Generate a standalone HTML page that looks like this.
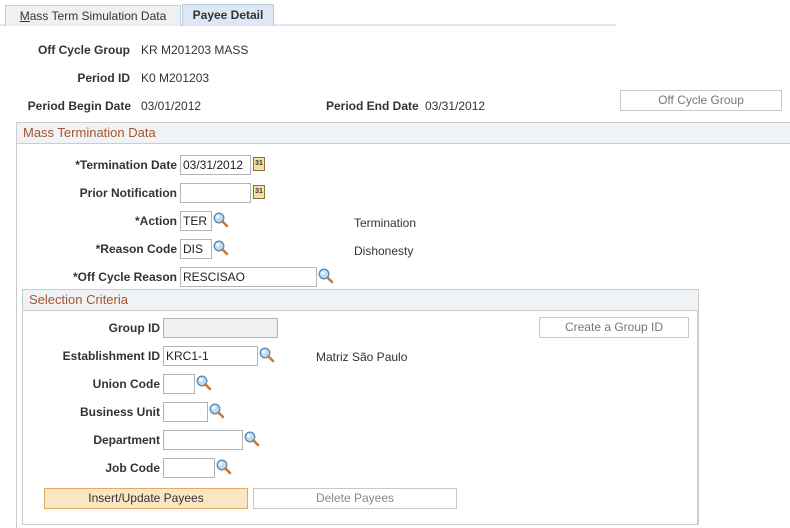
<!DOCTYPE html>
<html style="width:790px;height:528px;overflow:hidden"><head><meta charset="utf-8"><style>
*{margin:0;padding:0;box-sizing:border-box}
body{width:790px;height:528px;background:#fff;position:relative;overflow:hidden;font-family:"Liberation Sans",Arial,sans-serif;font-size:12px;color:#333}
.a{position:absolute}
.l{position:absolute;font-weight:bold;text-align:right;white-space:nowrap;line-height:14px}
.v{position:absolute;white-space:nowrap;line-height:14px}
.in{position:absolute;height:20px;border:1px solid #b4b4b4;background:#fff;padding-left:2px;line-height:18px;font-size:12px;color:#222}
.btn{position:absolute;height:21px;border:1px solid #c8c8c8;background:#fff;color:#777;text-align:center;line-height:19px}
.hd{position:absolute;background:#f0f3f5;border:1px solid #ccc;color:#a8542a;font-size:13px;line-height:19px;padding-left:6px}
.mg{position:absolute;width:16px;height:16px}
.cal{position:absolute;width:12px;height:14px;background:#f4e0a0;border:1px solid #8a7040;font-size:7px;font-weight:bold;line-height:11px;text-align:center;color:#333}
</style></head><body>
<div class="a" style="left:0;top:24px;width:616px;height:2px;background:#dde8f4"></div>
<div class="a" style="left:5px;top:5px;width:176px;height:21px;background:#eef1f4;border:1px solid #c8d0d8;border-bottom:none;text-align:center;line-height:20px;font-size:12px;color:#333"><u>M</u>ass Term Simulation Data</div>
<div class="a" style="left:182px;top:4px;width:92px;height:22px;background:#dde8f4;border:1px solid #b8c8d8;border-bottom:none;text-align:center;line-height:21px;font-weight:bold;color:#333">Payee Detail</div>

<div class="l" style="right:660px;top:43px">Off Cycle Group</div><div class="v" style="left:141px;top:43px">KR M201203 MASS</div>
<div class="l" style="right:660px;top:71px">Period ID</div><div class="v" style="left:141px;top:71px">K0 M201203</div>
<div class="l" style="right:659px;top:99px">Period Begin Date</div><div class="v" style="left:141px;top:99px">03/01/2012</div>
<div class="l" style="left:326px;top:99px">Period End Date</div><div class="v" style="left:425px;top:99px">03/31/2012</div>
<div class="btn" style="left:620px;top:90px;width:162px">Off Cycle Group</div>

<div class="a" style="left:16px;top:122px;width:780px;height:420px;border:1px solid #ccc"></div>
<div class="hd" style="left:16px;top:122px;width:780px;height:22px">Mass Termination Data</div>

<div class="l" style="right:613px;top:158px">*Termination Date</div><div class="in" style="left:180px;top:155px;width:71px">03/31/2012</div><div class="cal" style="left:253px;top:157px">31</div>
<div class="l" style="right:613px;top:186px">Prior Notification</div><div class="in" style="left:180px;top:183px;width:71px"></div><div class="cal" style="left:253px;top:185px">31</div>
<div class="l" style="right:613px;top:214px">*Action</div><div class="in" style="left:180px;top:211px;width:32px">TER</div>
<div class="v" style="left:354px;top:216px">Termination</div>
<div class="l" style="right:613px;top:242px">*Reason Code</div><div class="in" style="left:180px;top:239px;width:32px">DIS</div>
<div class="v" style="left:354px;top:244px">Dishonesty</div>
<div class="l" style="right:613px;top:270px">*Off Cycle Reason</div><div class="in" style="left:180px;top:267px;width:137px">RESCISAO</div>

<div class="a" style="left:22px;top:289px;width:677px;height:236px;border:1px solid #ccc;border-right:2px solid #c8ccd8"></div>
<div class="hd" style="left:22px;top:289px;width:677px;height:22px">Selection Criteria</div>

<div class="l" style="right:630px;top:321px">Group ID</div><div class="in" style="left:163px;top:318px;width:115px;background:#f0f0f0"></div>
<div class="btn" style="left:539px;top:317px;width:150px">Create a Group ID</div>
<div class="l" style="right:630px;top:349px">Establishment ID</div><div class="in" style="left:163px;top:346px;width:95px">KRC1-1</div>
<div class="v" style="left:316px;top:350px">Matriz São Paulo</div>
<div class="l" style="right:630px;top:377px">Union Code</div><div class="in" style="left:163px;top:374px;width:32px"></div>
<div class="l" style="right:630px;top:405px">Business Unit</div><div class="in" style="left:163px;top:402px;width:45px"></div>
<div class="l" style="right:630px;top:433px">Department</div><div class="in" style="left:163px;top:430px;width:80px"></div>
<div class="l" style="right:630px;top:461px">Job Code</div><div class="in" style="left:163px;top:458px;width:52px"></div>

<div class="btn" style="left:44px;top:488px;width:204px;background:#fbe6c4;border-color:#e4a860;color:#333">Insert/Update Payees</div>
<div class="btn" style="left:253px;top:488px;width:204px;color:#888">Delete Payees</div>

<svg width="0" height="0" style="position:absolute"><defs><symbol id="m" viewBox="0 0 16 16"><circle cx="6" cy="6" r="4.8" fill="#bcdcf4" stroke="#5a8ab8" stroke-width="1.3"/><circle cx="4.8" cy="4.8" r="1.6" fill="#fff"/><path d="M9.5 9.5 L14 14" stroke="#c87830" stroke-width="2.6" stroke-linecap="round"/></symbol></defs></svg>
<svg class="mg" style="left:213px;top:212px"><use href="#m"/></svg>
<svg class="mg" style="left:213px;top:240px"><use href="#m"/></svg>
<svg class="mg" style="left:318px;top:268px"><use href="#m"/></svg>
<svg class="mg" style="left:259px;top:347px"><use href="#m"/></svg>
<svg class="mg" style="left:196px;top:375px"><use href="#m"/></svg>
<svg class="mg" style="left:209px;top:403px"><use href="#m"/></svg>
<svg class="mg" style="left:244px;top:431px"><use href="#m"/></svg>
<svg class="mg" style="left:216px;top:459px"><use href="#m"/></svg>
</body></html>
